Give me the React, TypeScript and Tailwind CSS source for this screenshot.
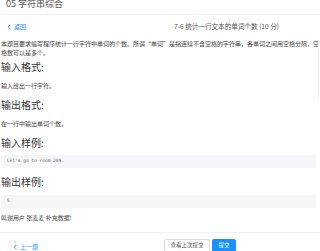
import React from "react";

const font = { fontFamily: '"Noto Sans CJK SC", "Noto Sans", sans-serif' };
const mono = { fontFamily: '"DejaVu Sans Mono", monospace' };

function Back({ label }: { label: string }) {
  return (
    <div className="flex items-center text-[#1890ff] text-[6px] leading-[8px]">
      <svg width="5" height="6" viewBox="0 0 5 6" className="mr-[2px]">
        <path d="M3.5 0.8 L1.3 3 L3.5 5.2" fill="none" stroke="#1890ff" strokeWidth="1" />
      </svg>
      {label}
    </div>
  );
}

export default function App() {
  return (
    <div className="w-[320px] h-[251px] overflow-hidden bg-white text-[#333] relative" style={font}>
      <div className="h-[15px] border-b border-[#f0f0f0] px-[6px] overflow-hidden">
        <div className="text-[9px] leading-[10px] -mt-[1px] text-[#555]">05 字符串综合</div>
      </div>
      <div className="h-[24px] flex items-center justify-between pl-[7px] pr-[41px] pb-[1px]">
        <Back label="返回" />
        <div className="text-[6.6px] leading-[9px] text-[#555]">7-6 统计一行文本的单词个数 (10 分)</div>
      </div>
      <div className="px-[1px] text-[6px] leading-[9px] text-[#444]">
        本题目要求编写程序统计一行字符中单词的个数。所谓“单词”是指连续不含空格的字符串，各单词之间用空格分隔，空格数可以是多个。
      </div>
      <div className="pl-[1px] pr-[4px]">
        <div className="mt-[3px] text-[10px] leading-[14px] text-[#333]">输入格式:</div>
        <div className="mt-[7px] text-[6px] leading-[9px] text-[#444]">输入给出一行字符。</div>
        <div className="mt-[8px] text-[10px] leading-[14px] text-[#333]">输出格式:</div>
        <div className="mt-[7px] text-[6px] leading-[9px] text-[#444]">在一行中输出单词个数。</div>
        <div className="mt-[8px] text-[10px] leading-[14px] text-[#333]">输入样例:</div>
        <div className="mt-[5px] h-[13px] rounded-[2px] bg-[#f5f6f8] flex items-center pl-[6px] text-[4.5px] text-[#666]" style={mono}>Let's go to room 209.</div>
        <div className="mt-[7px] text-[10px] leading-[14px] text-[#333]">输出样例:</div>
        <div className="mt-[6px] h-[13px] rounded-[2px] bg-[#f5f6f8] flex items-center pl-[6px] text-[4.5px] text-[#666]" style={mono}>5</div>
        <div className="mt-[5px] text-[6px] leading-[9px] text-[#444]">鸣谢用户 张麦麦 补充数据!</div>
      </div>
      <div className="mt-[10px] border-t border-[#f0f0f0] h-[20px] flex items-end justify-between pl-[13px] pr-[84px]">
        <div className="pb-[1px]">
          <Back label="上一题" />
        </div>
        <div className="flex gap-[2px]">
          <div className="h-[13px] w-[46px] border border-[#d9d9d9] rounded-[2px] flex items-center justify-center text-[5.5px] text-[#555] bg-white">查看上次提交</div>
          <div className="h-[13px] w-[24px] rounded-[2px] bg-[#1890ff] flex items-center justify-center text-[5.5px] text-white">提交</div>
        </div>
      </div>
      <div className="absolute right-0 top-[40px] h-[60px] w-[2px] border-l border-[#f0f0f0]" />
    </div>
  );
}
